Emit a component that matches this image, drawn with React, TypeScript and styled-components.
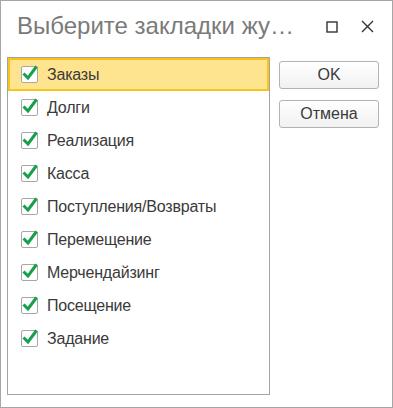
import styled, { createGlobalStyle } from "styled-components";

const GlobalStyle = createGlobalStyle`
  html, body {
    margin: 0;
    padding: 0;
    background: #ffffff;
  }
  body {
    font-family: "Liberation Sans", Arial, sans-serif;
  }
`;

const Window = styled.div`
  box-sizing: border-box;
  width: 393px;
  height: 408px;
  border: 1px solid #a6a6a6;
  background: #ffffff;
  display: flex;
  flex-direction: column;
`;

const TitleBar = styled.div`
  height: 56px;
  display: flex;
  align-items: flex-start;
  padding: 10px 0 0 16px;
  box-sizing: border-box;
`;

const Title = styled.div`
  flex: 1;
  font-size: 24px;
  line-height: 30px;
  color: #7a7a7a;
  white-space: nowrap;
`;

const WindowButtons = styled.div`
  display: flex;
  gap: 23px;
  padding: 9px 18px 0 0;
  align-items: center;
`;

const Content = styled.div`
  flex: 1;
  display: flex;
  padding: 0 13px 12px 6px;
  gap: 9px;
  min-height: 0;
`;

const List = styled.div`
  box-sizing: border-box;
  width: 264px;
  border: 1px solid #a3a3a3;
  display: flex;
  flex-direction: column;
`;

const Row = styled.div<{ $selected?: boolean }>`
  box-sizing: border-box;
  height: 33px;
  display: flex;
  align-items: center;
  gap: 7px;
  padding-left: ${(p) => (p.$selected ? "10px" : "12px")};
  border: ${(p) => (p.$selected ? "2px solid #f6c41c" : "none")};
  background: ${(p) => (p.$selected ? "#fee48e" : "transparent")};
  font-size: 16px;
  letter-spacing: -0.2px;
  color: #3a3a3a;
`;

const Label = styled.span`
  line-height: 18px;
`;

const Side = styled.div`
  display: flex;
  flex-direction: column;
  gap: 11px;
  padding-top: 4px;
`;

const Button = styled.button`
  width: 100px;
  height: 28px;
  box-sizing: border-box;
  border: 1px solid #b3b3b3;
  border-radius: 3px;
  background: linear-gradient(#ffffff, #f1f1f1);
  font-family: "Liberation Sans", Arial, sans-serif;
  font-size: 16px;
  color: #3a3a3a;
  padding: 0;
  cursor: pointer;
`;

const Check = () => (
  <svg width="20" height="20" viewBox="0 0 20 20">
    <rect x="1.5" y="1.5" width="16" height="16" rx="1.5" fill="#fff" stroke="#a7a7a7" />
    <path d="M3.5 8.5 L8 13 L16.5 1.5" fill="none" stroke="#17a04b" strokeWidth="3" />
  </svg>
);

const MaxIcon = () => (
  <svg width="12" height="12" viewBox="0 0 12 12">
    <rect x="1" y="1" width="10" height="10" fill="none" stroke="#333" strokeWidth="1.4" />
  </svg>
);

const CloseIcon = () => (
  <svg width="13" height="13" viewBox="0 0 13 13">
    <path d="M1 1 L12 12 M12 1 L1 12" stroke="#333" strokeWidth="1.4" />
  </svg>
);

const items = [
  "Заказы",
  "Долги",
  "Реализация",
  "Касса",
  "Поступления/Возвраты",
  "Перемещение",
  "Мерчендайзинг",
  "Посещение",
  "Задание",
];

const App = () => (
  <>
    <GlobalStyle />
    <Window>
      <TitleBar>
        <Title>Выберите закладки жу…</Title>
        <WindowButtons>
          <MaxIcon />
          <CloseIcon />
        </WindowButtons>
      </TitleBar>
      <Content>
        <List>
          {items.map((item, i) => (
            <Row key={item} $selected={i === 0}>
              <Check />
              <Label>{item}</Label>
            </Row>
          ))}
        </List>
        <Side>
          <Button>OK</Button>
          <Button>Отмена</Button>
        </Side>
      </Content>
    </Window>
  </>
);

export default App;
